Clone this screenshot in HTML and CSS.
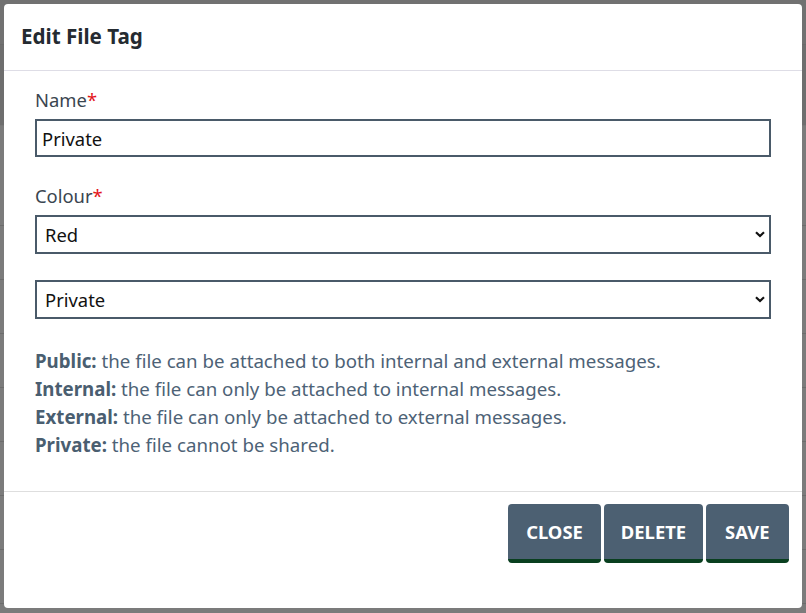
FILE: index.html
```html
<!DOCTYPE html>
<html lang="en">
<head>
<meta charset="utf-8">
<title>Edit File Tag</title>
<link rel="stylesheet" href="styles.css">
</head>
<body>
<div class="page">
  <div class="page-top"></div>
  <div class="page-head"></div>
  <div class="page-row tall"></div>
  <div class="page-row"></div>
  <div class="page-row"></div>
  <div class="page-row"></div>
  <div class="page-row"></div>
  <div class="page-row"></div>
  <div class="page-row"></div>
  <div class="page-row"></div>
</div>

<div class="modal">
  <div class="modal-header">
    <h5 class="modal-title">Edit File Tag</h5>
  </div>
  <div class="modal-body">
    <div class="form-group">
      <label class="form-label">Name<span class="req">*</span></label>
      <input class="form-input" type="text" value="Private">
    </div>
    <div class="form-group">
      <label class="form-label">Colour<span class="req">*</span></label>
      <div class="select-wrap">
        <select class="form-select"><option>Red</option></select>
        <svg class="chev" width="10" height="7" viewBox="0 0 10 7"><path d="M1 1.2 L5 5 L9 1.2" fill="none" stroke="#111" stroke-width="2.2"/></svg>
      </div>
    </div>
    <div class="form-group">
      <div class="select-wrap">
        <select class="form-select"><option>Private</option></select>
        <svg class="chev" width="10" height="7" viewBox="0 0 10 7"><path d="M1 1.2 L5 5 L9 1.2" fill="none" stroke="#111" stroke-width="2.2"/></svg>
      </div>
    </div>
    <div class="help">
      <div><b>Public:</b> the file can be attached to both internal and external messages.</div>
      <div><b>Internal:</b> the file can only be attached to internal messages.</div>
      <div><b>External:</b> the file can only be attached to external messages.</div>
      <div><b>Private:</b> the file cannot be shared.</div>
    </div>
  </div>
  <div class="modal-footer">
    <button class="btn btn-close">CLOSE</button>
    <button class="btn btn-delete">DELETE</button>
    <button class="btn btn-save">SAVE</button>
  </div>
</div>
</body>
</html>
```

FILE: styles.css
```css
* { box-sizing: border-box; }

html, body {
  margin: 0;
  padding: 0;
  width: 806px;
  height: 613px;
  overflow: hidden;
}

body {
  background: #7b7b7b;
  font-family: "Noto Sans", "Open Sans", sans-serif;
  position: relative;
}

.page-top {
  height: 45px;
  background: #717171;
  border-bottom: 1px solid #6a6a6a;
}
.page-head {
  height: 81px;
  background: #6e6e6e;
  border-bottom: 1px solid #777;
}
.page-row {
  height: 54px;
  border-bottom: 1px solid #6c6c6c;
}
.page-row.tall {
  height: 100px;
}

.modal {
  position: absolute;
  left: 4px;
  top: 4px;
  width: 798px;
  height: 604px;
  background: #fff;
  border-radius: 4px;
  display: flex;
  flex-direction: column;
}

.modal-header {
  padding: 16px 17px 17px;
  border-bottom: 1px solid #dedde6;
}

.modal-title {
  margin: 0;
  font-size: 20.6px;
  line-height: 33px;
  font-weight: 700;
  color: #252b31;
}

.modal-body {
  padding: 16px 31px 0 31px;
  height: 421px;
  flex: none;
  border-bottom: 1px solid #dedede;
}

.form-group {
  margin-bottom: 26px;
}

.form-label {
  display: block;
  font-size: 18.4px;
  line-height: 26px;
  color: #3a4550;
  margin-bottom: 6px;
}

.req {
  color: #e3151a;
}

.form-input,
.form-select {
  display: block;
  width: 736px;
  height: 38px;
  border: 2px solid #4a5a69;
  border-radius: 0;
  background: #fff;
  font-family: "Noto Sans", "Open Sans", sans-serif;
  font-size: 18.4px;
  color: #111;
  padding: 0 5px;
  margin: 0;
  outline: none;
}

.form-select {
  height: 39px;
  padding: 0 8px;
  appearance: none;
  -webkit-appearance: none;
}

.select-wrap {
  position: relative;
  width: 736px;
}

.chev {
  position: absolute;
  right: 6px;
  top: 16px;
  pointer-events: none;
}

.help {
  margin-top: 28px;
  font-size: 18.7px;
  line-height: 28px;
  color: #4d6276;
}

.help b {
  font-weight: 700;
  color: #4a5e70;
}

.modal-footer {
  display: flex;
  justify-content: flex-end;
  gap: 3px;
  padding: 12px 13px 0 0;
}

.btn {
  height: 59px;
  padding: 0 18px;
  border: 0;
  border-bottom: 4px solid #093f1f;
  border-radius: 4px;
  background: #4c6072;
  color: #fff;
  font-family: "Noto Sans", "Open Sans", sans-serif;
  font-size: 18.4px;
  font-weight: 700;
  cursor: pointer;
}

.btn-close { padding: 0 18.5px; }
.btn-delete { padding: 0 16.5px; }
.btn-save { padding: 0 19.5px; }
```
